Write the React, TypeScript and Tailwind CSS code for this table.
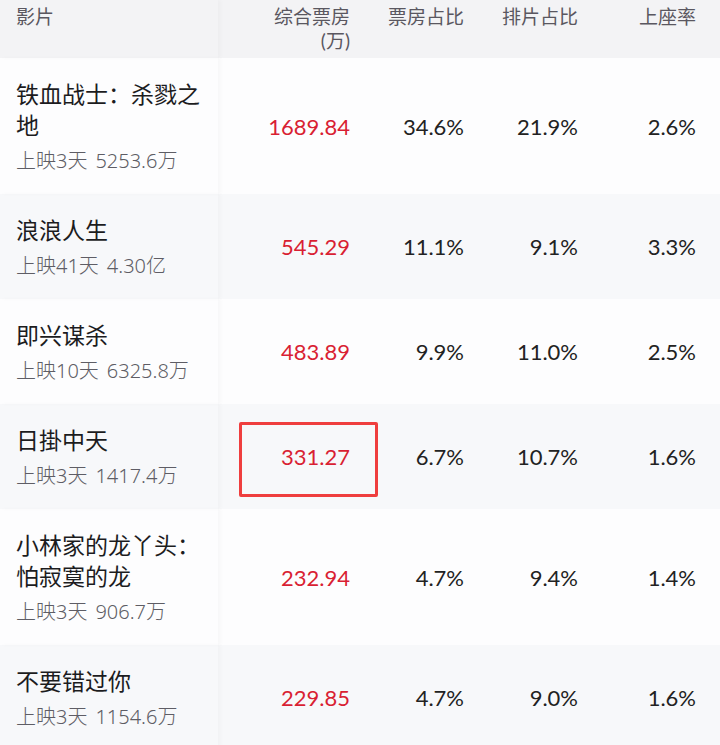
import React from "react";

type Movie = {
  name: string;
  days: string;
  total: string;
  box: string;
  share: string;
  schedule: string;
  seat: string;
  highlight?: boolean;
};

const movies: Movie[] = [
  { name: "铁血战士：杀戮之地", days: "上映3天", total: "5253.6万", box: "1689.84", share: "34.6%", schedule: "21.9%", seat: "2.6%" },
  { name: "浪浪人生", days: "上映41天", total: "4.30亿", box: "545.29", share: "11.1%", schedule: "9.1%", seat: "3.3%" },
  { name: "即兴谋杀", days: "上映10天", total: "6325.8万", box: "483.89", share: "9.9%", schedule: "11.0%", seat: "2.5%" },
  { name: "日掛中天", days: "上映3天", total: "1417.4万", box: "331.27", share: "6.7%", schedule: "10.7%", seat: "1.6%", highlight: true },
  { name: "小林家的龙丫头：怕寂寞的龙", days: "上映3天", total: "906.7万", box: "232.94", share: "4.7%", schedule: "9.4%", seat: "1.4%" },
  { name: "不要错过你", days: "上映3天", total: "1154.6万", box: "229.85", share: "4.7%", schedule: "9.0%", seat: "1.6%" },
];

const grid = "grid grid-cols-[218px_148px_114px_114px_126px]";
const font = { fontFamily: '"Lato", "Noto Sans CJK SC", sans-serif' };
const subFont = { fontFamily: '"Noto Sans", "Noto Sans CJK SC", sans-serif' };

const App: React.FC = () => {
  return (
    <div className="w-[720px] h-[745px] overflow-hidden bg-[#fbfbfc]" style={font}>
      <div className={`${grid} h-[58px] bg-[#f3f3f5] text-[19px] leading-[24px] text-[#5a5760]`}>
        <div className="pl-4 pt-[5px] shadow-[3px_0_4px_rgba(0,0,0,0.025)]">影片</div>
        <div className="pr-4 pt-[5px] text-right">
          综合票房
          <br />
          (万)
        </div>
        <div className="pr-4 pt-[5px] text-right">票房占比</div>
        <div className="pr-4 pt-[5px] text-right">排片占比</div>
        <div className="pr-6 pt-[5px] text-right">上座率</div>
      </div>

      {movies.map((m, i) => (
        <div
          key={m.name}
          className={`${grid} ${i % 2 === 0 ? "bg-[#fdfdfe]" : "bg-[#f7f8fa]"}`}
        >
          <div className="pl-4 pr-2 pt-[21px] pb-[21px] shadow-[3px_0_4px_rgba(0,0,0,0.025)]">
            <div className="text-[23px] leading-[31px] text-[#1c1c1e]">{m.name}</div>
            <div className="mt-2 text-[20px] leading-[24px] text-[#5e5d65] font-light" style={subFont}>
              {m.days}
              <span className="ml-[8px]">{m.total}</span>
            </div>
          </div>
          <div className="relative flex items-center justify-end pr-4 text-[22px] text-[#d91f33]">
            {m.box}
            {m.highlight && (
              <div className="absolute left-[21px] top-[18px] w-[139px] h-[75px] border-[3px] border-[#ef3e3e] rounded-[2px]" />
            )}
          </div>
          <div className="flex items-center justify-end pr-4 text-[22px] text-[#222]">{m.share}</div>
          <div className="flex items-center justify-end pr-4 text-[22px] text-[#222]">{m.schedule}</div>
          <div className="flex items-center justify-end pr-6 text-[22px] text-[#222]">{m.seat}</div>
        </div>
      ))}
    </div>
  );
};

export default App;
